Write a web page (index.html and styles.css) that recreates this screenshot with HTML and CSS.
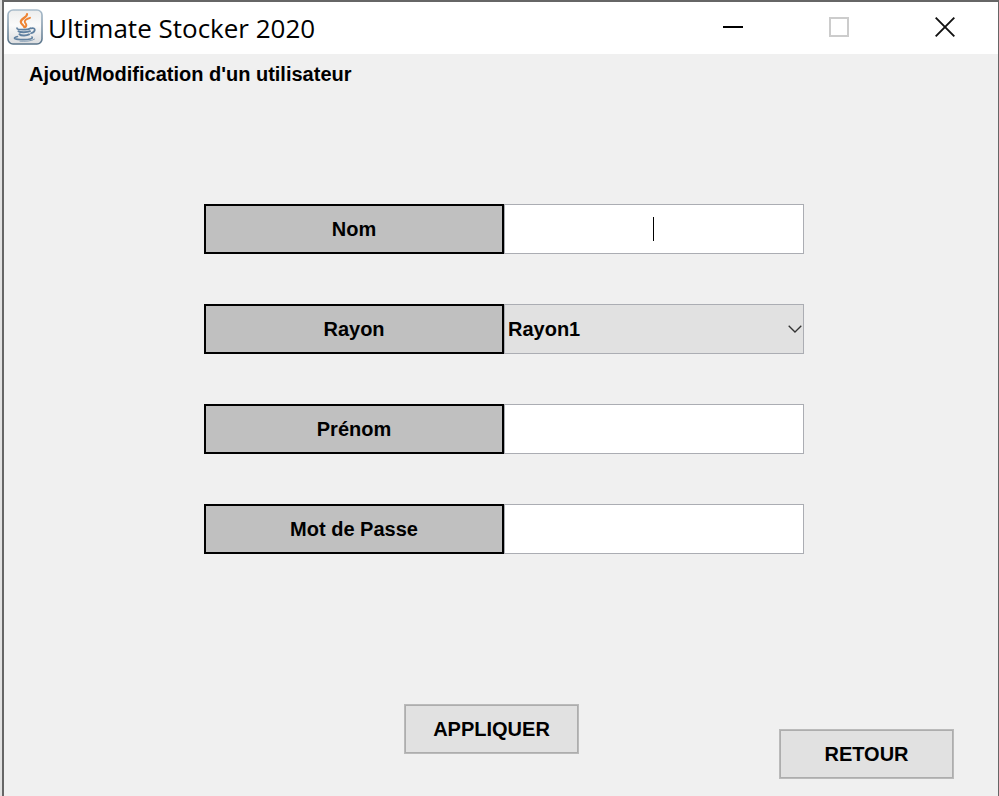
FILE: index.html
```html
<!DOCTYPE html>
<html lang="fr">
<head>
<meta charset="utf-8">
<title>Ultimate Stocker 2020</title>
<link rel="stylesheet" href="styles.css">
</head>
<body>
<div class="window">
  <header class="titlebar">
    <svg class="app-icon" viewBox="0 0 36 36" aria-hidden="true">
      <defs>
        <linearGradient id="tile" x1="0" y1="0" x2="0" y2="1">
          <stop offset="0" stop-color="#eceded"/>
          <stop offset=".45" stop-color="#fafafa"/>
          <stop offset="1" stop-color="#dcdddf"/>
        </linearGradient>
        <linearGradient id="edge" x1="0" y1="0" x2="0" y2="1">
          <stop offset="0" stop-color="#a9bccb"/>
          <stop offset="1" stop-color="#59748a"/>
        </linearGradient>
      </defs>
      <rect x="1" y="1" width="34" height="34" rx="5" fill="url(#tile)" stroke="url(#edge)" stroke-width="1.600"/>
      <g fill="none" stroke-linecap="round">
        <path d="M20 5C20.500 8.500 13.500 9.500 13.800 13C14 15.200 16.500 16 17.300 18.200" stroke="#ee8434" stroke-width="2.200"/>
        <path d="M23 8.800C19 10 17 11.500 18 13.500C19 15.200 20.500 15.800 18.500 18" stroke="#ee8434" stroke-width="1.900"/>
        <path d="M10 19.200C10 21 21 21 23.500 19.200" stroke="#6080a0" stroke-width="1.700"/>
        <path d="M11.500 22.200C13 23.600 20 23.600 23 22.200" stroke="#6080a0" stroke-width="2"/>
        <path d="M12.500 25.200C14 26.800 19.500 26.800 22 25.400" stroke="#6080a0" stroke-width="2"/>
        <path d="M24.500 19.300C29 18.300 29 22.800 24 24.300" stroke="#6080a0" stroke-width="1.700"/>
        <path d="M10.500 27.500C4 29.500 9 30.600 16 30.600C22 30.600 26.500 30 25 28" stroke="#6080a0" stroke-width="1.600"/>
        <path d="M13 32.200C18 32.600 24.500 32.200 27.500 30.200" stroke="#8ba2b7" stroke-width="1"/>
      </g>
    </svg>
    <span class="app-name">Ultimate Stocker 2020</span>
    <div class="controls">
      <button type="button" class="control" aria-label="Réduire">
        <svg viewBox="0 0 20 20"><path d="M0 10h20" stroke="#000" stroke-width="2"/></svg>
      </button>
      <button type="button" class="control" aria-label="Agrandir" disabled>
        <svg viewBox="0 0 20 20"><rect x="1" y="1" width="18" height="18" fill="none" stroke="#ccc" stroke-width="2"/></svg>
      </button>
      <button type="button" class="control" aria-label="Fermer">
        <svg viewBox="0 0 20 20"><path d="M.7.7l18.600 18.600M19.300.7L.7 19.300" stroke="#111" stroke-width="1.900"/></svg>
      </button>
    </div>
  </header>
  <main class="content">
    <h1 class="heading">Ajout/Modification d'un utilisateur</h1>
    <form class="form">
      <div class="row">
        <label class="label" for="nom">Nom</label>
        <div class="field">
          <input class="input" id="nom" type="text">
          <span class="caret"></span>
        </div>
      </div>
      <div class="row">
        <label class="label" for="rayon">Rayon</label>
        <div class="field">
          <select class="input select" id="rayon"><option>Rayon1</option></select>
          <svg class="chevron" viewBox="0 0 14 8" aria-hidden="true"><path d="M.7.7L7 7L13.300.7" fill="none" stroke="#333" stroke-width="1.300"/></svg>
        </div>
      </div>
      <div class="row">
        <label class="label" for="prenom">Prénom</label>
        <div class="field"><input class="input" id="prenom" type="text"></div>
      </div>
      <div class="row">
        <label class="label" for="passe">Mot de Passe</label>
        <div class="field"><input class="input" id="passe" type="password"></div>
      </div>
    </form>
    <div class="actions">
      <button type="button" class="button">APPLIQUER</button>
      <button type="button" class="button back">RETOUR</button>
    </div>
  </main>
</div>
</body>
</html>
```
FILE: styles.css
```css
* {
  box-sizing: border-box;
}

body {
  margin: 0;
  padding-left: 2px;
  background: #e2e2e2;
  color: #000;
  font: bold 20px/24px "Liberation Sans", Arial, sans-serif;
}

.window {
  display: flex;
  flex-direction: column;
  min-height: 100vh;
  border: solid #666;
  border-width: 2px 1px 0 2px;
  background: #f0f0f0;
}

.titlebar {
  display: flex;
  align-items: flex-start;
  height: 52px;
  padding-left: 3px;
  background: #fff;
}

.app-icon {
  width: 36px;
  height: 36px;
  margin-top: 7px;
}

.app-name {
  margin-left: 5px;
  font: 26px/52px "Open Sans", "Noto Sans", sans-serif;
  white-space: nowrap;
}

.controls {
  display: flex;
  height: 50px;
  margin-left: auto;
}

.control {
  display: flex;
  align-items: center;
  justify-content: center;
  width: 106px;
  padding: 0;
  border: 0;
  background: none;
}

.control svg {
  width: 20px;
  height: 20px;
}

.content {
  display: flex;
  flex: 1;
  flex-direction: column;
  padding-top: 8px;
}

.heading {
  margin: 0 25px;
  font: inherit;
}

.form {
  display: grid;
  gap: 50px;
  margin: 118px 194px 0 200px;
}

.row {
  display: grid;
  grid-template-columns: 1fr 1fr;
  height: 50px;
}

.label {
  display: flex;
  align-items: center;
  justify-content: center;
  border: 2px solid #000;
  background: #c0c0c0;
}

.field {
  position: relative;
  display: flex;
}

.input {
  width: 100%;
  padding: 0 3px;
  border: 1px solid #abadb3;
  border-radius: 0;
  background: #fff;
  color: inherit;
  font: inherit;
  text-align: center;
  outline: 0;
}

.select {
  appearance: none;
  background: #e1e1e1;
  text-align: left;
}

.caret {
  position: absolute;
  top: 13px;
  left: calc(50% - 1px);
  width: 1px;
  height: 24px;
  background: #000;
}

.chevron {
  position: absolute;
  top: 21px;
  right: 2px;
  width: 14px;
  height: 8px;
  pointer-events: none;
}

.actions {
  display: flex;
  justify-content: space-between;
  margin: 150px 44px 0 400px;
}

.button {
  width: 175px;
  height: 50px;
  padding: 0;
  border: 1px solid #bababa;
  background: #e1e1e1;
  box-shadow: inset 0 0 0 1px #adadad;
  color: inherit;
  font: inherit;
}

.back {
  margin-top: 25px;
}
```
